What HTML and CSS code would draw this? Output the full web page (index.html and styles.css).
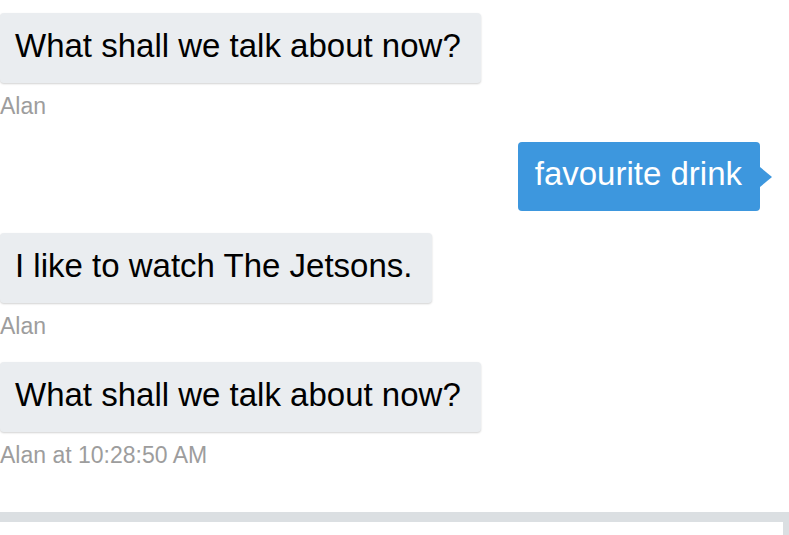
FILE: index.html
```html
<!DOCTYPE html>
<html lang="en">
<head>
  <meta charset="UTF-8">
  <meta name="viewport" content="width=device-width, initial-scale=1.0">
  <title>Chat</title>
  <link rel="stylesheet" href="styles.css">
</head>
<body>
  <div class="chat">
    <div class="message bot">
      <div class="bubble">What shall we talk about now?</div>
      <div class="meta">Alan</div>
    </div>
    <div class="message user">
      <div class="bubble">favourite drink</div>
    </div>
    <div class="message bot">
      <div class="bubble">I like to watch The Jetsons.</div>
      <div class="meta">Alan</div>
    </div>
    <div class="message bot">
      <div class="bubble">What shall we talk about now?</div>
      <div class="meta">Alan at 10:28:50 AM</div>
    </div>
  </div>
  <div class="composer"></div>
</body>
</html>
```

FILE: styles.css
```css
html, body {
  margin: 0;
  height: 100%;
  overflow: hidden;
  background: #fff;
}

body {
  font-family: "Liberation Sans", Arial, Helvetica, sans-serif;
  color: #000;
}

.chat {
  display: flex;
  flex-direction: column;
  padding: 13px 29px 0 0;
}

.message {
  display: flex;
  flex-direction: column;
  margin-bottom: 22px;
}

.message.bot {
  align-items: flex-start;
}

.message.user {
  align-items: flex-end;
}

.bubble {
  position: relative;
  font-size: 33px;
  line-height: 38px;
  padding: 14px 20px 18px 15px;
  border-radius: 4px;
  background-color: #eaedf0;
  box-shadow: 0 1px 2px rgba(0, 0, 0, 0.18);
  white-space: nowrap;
}

.user .bubble {
  background-color: #3d97de;
  color: #fff;
  padding: 13px 18px 18px 17px;
  box-shadow: none;
}

.user .bubble::after {
  content: "";
  position: absolute;
  right: -12px;
  top: 50%;
  margin-top: -10px;
  border-left: 12px solid #3d97de;
  border-top: 10px solid transparent;
  border-bottom: 10px solid transparent;
}

.meta {
  font-size: 23px;
  line-height: 26px;
  color: #9d9d9d;
  margin: 10px 0 1px;
}

.composer {
  margin-top: 21px;
  height: 13px;
  border-top: 10px solid #dbdfe2;
  border-right: 6px solid #dbdfe2;
  background: #fff;
}
```
